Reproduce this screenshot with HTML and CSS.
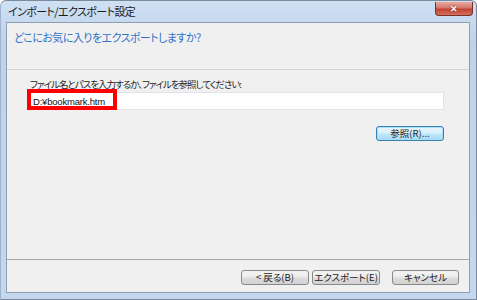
FILE: index.html
```html
<!DOCTYPE html>
<html lang="ja">
<head>
    <meta charset="UTF-8">
    <title>インポート/エクスポート設定</title>
    <link rel="stylesheet" href="styles.css">
</head>
<body>
    <div class="window">
        <div class="titlebar">
            <span class="title">インポート/エクスポート設定</span>
            <button class="close-btn">&#x2715;</button>
        </div>
        <div class="content">
            <div class="header">
                <h1>どこにお気に入りをエクスポートしますか?</h1>
            </div>
            <div class="body">
                <label class="field-label" for="path">ファイル名とパスを入力するか、ファイルを参照してください:</label>
                <div class="field">
                    <input type="text" id="path" value="D:¥bookmark.htm">
                    <div class="highlight"></div>
                </div>
                <div class="browse-row">
                    <button class="btn btn-default">参照(<u>R</u>)...</button>
                </div>
            </div>
            <div class="footer">
                <button class="btn">&lt; 戻る(<u>B</u>)</button>
                <button class="btn">エクスポート(<u>E</u>)</button>
                <button class="btn btn-cancel">キャンセル</button>
            </div>
        </div>
    </div>
</body>
</html>
```

FILE: styles.css
```css
body {
    margin: 0;
    background: #ffffff;
    font-family: "Noto Sans CJK JP", "Liberation Sans", sans-serif;
    font-feature-settings: "palt";
}
.window {
    width: 477px;
    height: 300px;
    box-sizing: border-box;
    border: 1px solid #7a8a9e;
    border-left-color: #9fb4cc;
    border-radius: 6px 6px 0 0;
    background: linear-gradient(#cfe0f3, #bdd3ec 40px, #c3d8ef);
    display: flex;
    flex-direction: column;
}
.titlebar {
    height: 21px;
    display: flex;
    align-items: flex-start;
    padding-left: 7px;
}
.title {
    font-size: 11px;
    line-height: 21px;
    color: #1b1b1b;
    letter-spacing: -0.6px;
}
.close-btn {
    margin-left: auto;
    margin-right: 3px;
    margin-top: 1px;
    width: 38px;
    height: 14px;
    padding: 0;
    border: 1px solid #7c3128;
    border-top: none;
    border-radius: 0 0 4px 4px;
    background: linear-gradient(#e8a9a0, #d6786b 45%, #c24332 55%, #d4705f);
    color: #ffffff;
    font-size: 9px;
    font-weight: bold;
    line-height: 12px;
    text-shadow: 0 0 2px #6b1a10;
}
.content {
    margin: 0 6px 6px 5px;
    flex: 1;
    border: 1px solid #8e9eb3;
    background: #f0f0f0;
    display: flex;
    flex-direction: column;
}
.header {
    height: 47px;
    border-bottom: 1px solid #d2d2d2;
    padding-left: 7px;
    box-sizing: border-box;
}
.header h1 {
    margin: 0;
    padding-top: 6px;
    font-size: 11px;
    font-weight: normal;
    line-height: 16px;
    color: #2f73c8;
    letter-spacing: -0.55px;
}
.body {
    flex: 1;
    padding: 7px 25px 0 20px;
}
.field-label {
    display: block;
    padding-left: 3px;
    font-size: 9.5px;
    line-height: 14px;
    color: #1e1e1e;
    letter-spacing: -1px;
}
.field {
    position: relative;
    margin-top: 1px;
}
.field input {
    display: block;
    width: 100%;
    height: 18px;
    box-sizing: border-box;
    margin: 0;
    padding: 0 5px;
    border: 1px solid #e2e3ea;
    background: #ffffff;
    font-family: "Liberation Sans", sans-serif;
    font-size: 9.5px;
    letter-spacing: -0.2px;
    color: #111111;
    outline: none;
}
.highlight {
    position: absolute;
    left: 0;
    top: -3px;
    width: 90px;
    height: 21px;
    box-sizing: border-box;
    border: 4px solid #ff0000;
}
.browse-row {
    display: flex;
    justify-content: flex-end;
    margin-top: 16px;
}
.btn {
    width: 68px;
    height: 15px;
    padding: 0;
    border: 1px solid #8a8a8a;
    border-radius: 3px;
    background: linear-gradient(#f4f4f4, #ececec 45%, #dcdcdc 55%, #d2d2d2);
    font-family: "Noto Sans CJK JP", sans-serif;
    font-feature-settings: "palt";
    font-size: 9.5px;
    line-height: 13px;
    color: #1a1a1a;
}
.btn u {
    text-decoration: none;
}
.btn-default {
    border-color: #3c7fb1;
    background: linear-gradient(#eaf6fd, #d9f0fc 45%, #bee6fd 55%, #a7d9f5);
    box-shadow: inset 0 0 0 1px #a9dcf6;
}
.footer {
    height: 33px;
    box-sizing: border-box;
    border-top: 1px solid #a8a8a8;
    display: flex;
    justify-content: flex-end;
    align-items: flex-start;
    gap: 3px;
    padding: 10px 10px 0 0;
}
.btn-cancel {
    margin-left: 9px;
    width: 67px;
}
```
